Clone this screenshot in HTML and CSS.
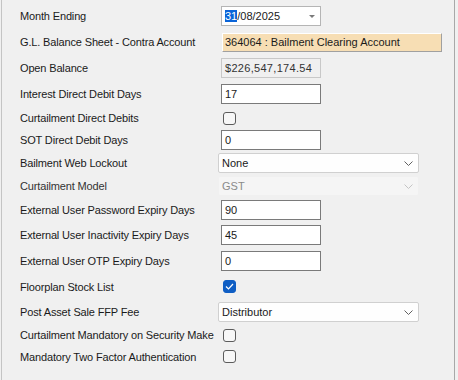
FILE: index.html
```html
<!DOCTYPE html>
<html lang="en">
<head>
  <meta charset="UTF-8">
  <title>Settings</title>
  <link rel="stylesheet" href="styles.css">
</head>
<body>
  <div class="panel">
    <div class="form">
      <div class="row r26">
        <label>Month Ending</label>
        <div class="date-box"><span class="sel">31</span>/08/2025<span class="tri"></span></div>
      </div>
      <div class="row r26">
        <label>G.L. Balance Sheet - Contra Account</label>
        <div class="account-box">364064 : Bailment Clearing Account</div>
      </div>
      <div class="row r26">
        <label>Open Balance</label>
        <div class="readonly-box">$226,547,174.54</div>
      </div>
      <div class="row r26">
        <label>Interest Direct Debit Days</label>
        <div class="text-box">17</div>
      </div>
      <div class="row r22">
        <label>Curtailment Direct Debits</label>
        <span class="check"></span>
      </div>
      <div class="row r22">
        <label>SOT Direct Debit Days</label>
        <div class="text-box">0</div>
      </div>
      <div class="row r24">
        <label>Bailment Web Lockout</label>
        <div class="combo">None<svg class="chev" width="9" height="5" viewBox="0 0 9 5"><path d="M0.5 0.5 L4.5 4.5 L8.5 0.5" fill="none" stroke="#606060" stroke-width="1"/></svg></div>
      </div>
      <div class="row r22">
        <label class="dim">Curtailment Model</label>
        <div class="combo disabled">GST<svg class="chev" width="9" height="5" viewBox="0 0 9 5"><path d="M0.5 0.5 L4.5 4.5 L8.5 0.5" fill="none" stroke="#c4c4c4" stroke-width="1"/></svg></div>
      </div>
      <div class="row r25">
        <label>External User Password Expiry Days</label>
        <div class="text-box">90</div>
      </div>
      <div class="row r26">
        <label>External User Inactivity Expiry Days</label>
        <div class="text-box">45</div>
      </div>
      <div class="row r25">
        <label>External User OTP Expiry Days</label>
        <div class="text-box">0</div>
      </div>
      <div class="row r27">
        <label>Floorplan Stock List</label>
        <span class="check checked"><svg width="9" height="7" viewBox="0 0 9 7"><path d="M1 3.5 L3.5 6 L8 1" fill="none" stroke="#fff" stroke-width="1.2"/></svg></span>
      </div>
      <div class="row r24">
        <label>Post Asset Sale FFP Fee</label>
        <div class="combo">Distributor<svg class="chev" width="9" height="5" viewBox="0 0 9 5"><path d="M0.5 0.5 L4.5 4.5 L8.5 0.5" fill="none" stroke="#606060" stroke-width="1"/></svg></div>
      </div>
      <div class="row r22">
        <label>Curtailment Mandatory on Security Make</label>
        <span class="check"></span>
      </div>
      <div class="row r21">
        <label>Mandatory Two Factor Authentication</label>
        <span class="check"></span>
      </div>
    </div>
  </div>
</body>
</html>
```

FILE: styles.css
```css
body {
  margin: 0;
  background: #f0f0f0;
  font-family: "Liberation Sans", Arial, sans-serif;
  font-size: 11px;
  color: #1a1a1a;
}
.panel {
  width: 454px;
  height: 380px;
  margin-left: 1px;
  border-left: 1px solid #c4c4c4;
  border-right: 1px solid #a8a8a8;
  box-sizing: border-box;
  padding-top: 3px;
}
.form {
  display: flex;
  flex-direction: column;
}
.row {
  display: grid;
  grid-template-columns: 198px 1fr;
  align-items: center;
  padding-left: 18px;
  white-space: nowrap;
}
.row label {
  letter-spacing: -0.15px;
}
.r21 { height: 21px; }
.r22 { height: 22px; }
.r24 { height: 24px; }
.r25 { height: 25px; }
.r26 { height: 26px; }
.r27 { height: 27px; }
.dim {
  color: #333;
}
.text-box,
.date-box,
.readonly-box {
  width: 100px;
  height: 20px;
  margin-left: 3px;
  box-sizing: border-box;
  border: 1px solid #7a7a7a;
  background: #fff;
  padding-left: 3px;
  line-height: 18px;
}
.date-box {
  border-color: #b5b5b5;
  position: relative;
}
.date-box .sel {
  background: #0a64d8;
  color: #fff;
}
.tri {
  position: absolute;
  right: 5px;
  top: 8px;
  border-left: 3px solid transparent;
  border-right: 3px solid transparent;
  border-top: 3px solid #7a7a7a;
}
.readonly-box {
  background: #f0f0f0;
  border-color: #c8c8c8;
  color: #333;
  letter-spacing: 0.3px;
}
.account-box {
  width: 220px;
  height: 19px;
  margin-left: 4px;
  box-sizing: border-box;
  background: #f7deb4;
  border-right: 1px solid #a0a0a0;
  border-bottom: 1px solid #a0a0a0;
  border-top: 1px solid #fff;
  border-left: 1px solid #fff;
  padding-left: 2px;
  line-height: 17px;
}
.combo {
  width: 201px;
  height: 20px;
  box-sizing: border-box;
  border: 1px solid #d0d0d0;
  border-radius: 2px;
  background: #fefefe;
  padding-left: 3px;
  line-height: 18px;
  display: flex;
  align-items: center;
  justify-content: space-between;
  padding-right: 5px;
}
.combo.disabled {
  background: #f5f5f5;
  border-color: #f0f0f0;
  color: #8a8a8a;
}
.check {
  width: 13px;
  height: 13px;
  margin-left: 5px;
  box-sizing: border-box;
  border: 1px solid #5c5c5c;
  border-radius: 3px;
  background: #f7f7f7;
  display: flex;
  align-items: center;
  justify-content: center;
}
.check.checked {
  background: #0f5ec4;
  border-color: #0f5ec4;
}
```
